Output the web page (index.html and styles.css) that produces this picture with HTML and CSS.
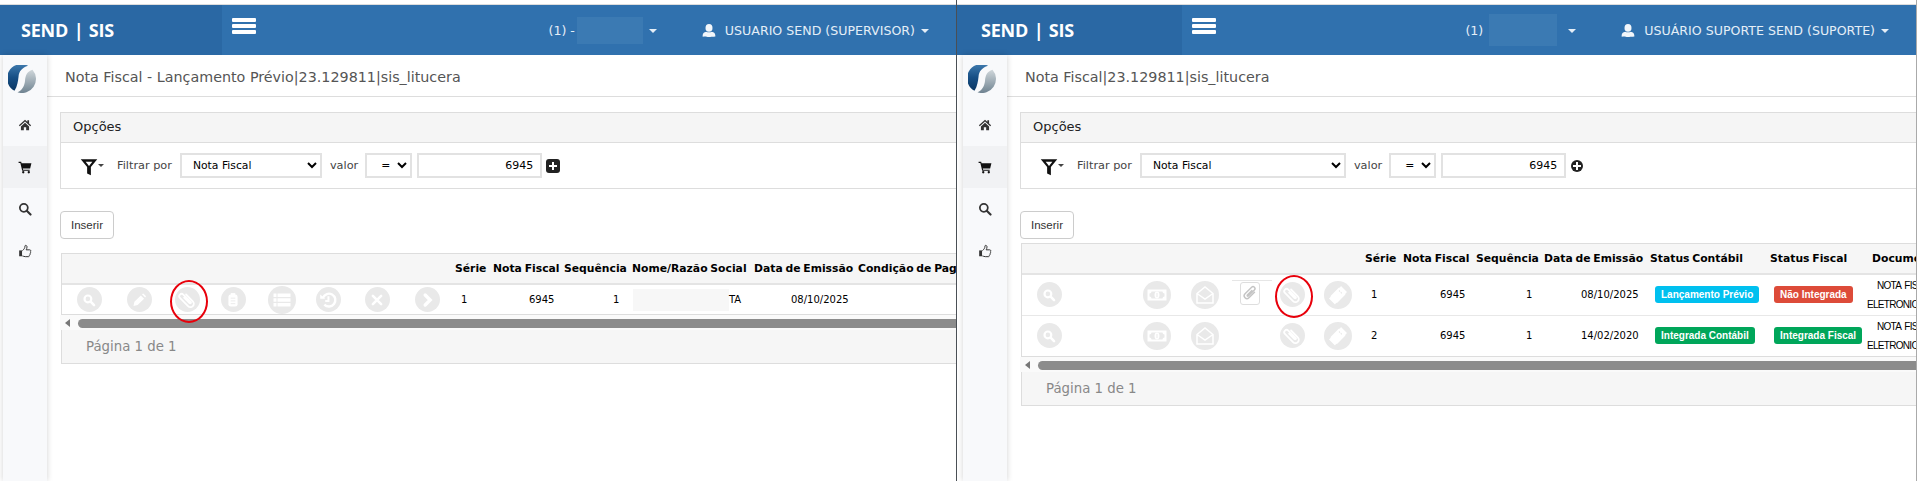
FILE: index.html
```html
<!doctype html>
<html lang="pt-BR">
<head>
    <meta charset="UTF-8">
    <title>SEND | SIS</title>
    <link rel="stylesheet" href="styles.css">
</head>
<body>

<!-- icones usados nas duas telas -->
<svg class="sprite" aria-hidden="true">
    <defs>
        <linearGradient id="logo-azul" x1="0" y1="0" x2="0" y2="1"><stop offset="0" stop-color="#3f7aae"/><stop offset=".5" stop-color="#174f85"/><stop offset="1" stop-color="#0b3763"/></linearGradient>
        <linearGradient id="logo-cinza" x1="0" y1="0" x2="0" y2="1"><stop offset="0" stop-color="#cfd6da"/><stop offset="1" stop-color="#6f8391"/></linearGradient>
    </defs>
    <symbol id="i-logo" viewBox="0 0 28 28">
        <path d="M20 .8A14 14 0 0 0 6.500 25.800C9.500 21 10 16 10.500 12 11 6 14 3 20 .8z" fill="url(#logo-azul)"/>
        <path d="M24.500 4.800A14 14 0 0 1 9.500 27.300C14 25.500 16.500 21 17 16 17.500 10 19 6.500 24.500 4.800z" fill="url(#logo-cinza)"/>
    </symbol>
    <symbol id="i-home" viewBox="0 0 24 24"><path d="M12 3 1.500 12.500 3 14l9-8 9 8 1.500-1.500L19 9.300V4h-3v2.600z"/><path d="M5 14.500 12 8.300l7 6.200V21h-5v-5h-4v5H5z"/></symbol>
    <symbol id="i-cart" viewBox="0 0 24 24"><path d="M1 3h4.500l.6 2.500H23l-2.200 9H8.300l.5 2H20v2H7.200L4 5H1z"/><circle cx="9" cy="21" r="2"/><circle cx="18.500" cy="21" r="2"/></symbol>
    <symbol id="i-search" viewBox="0 0 24 24"><circle cx="10" cy="10" r="6.800" fill="none" stroke="currentColor" stroke-width="3"/><path d="m15 15 6.500 6.500" stroke="currentColor" stroke-width="3.600" stroke-linecap="round"/></symbol>
    <symbol id="i-thumb" viewBox="0 0 24 24"><path d="M2 11h5v10H2z"/><path d="M7.500 11.500c2.500-2 4.500-4.500 4.500-8 0-2 3.500-1.500 3.500 1.500 0 2-1 3.500-1.500 5h6c2.500 0 2.500 3 1 3.500 1 1 .7 2.700-.5 3 .5 1.300 0 2.600-1 3 .3 1.300-.5 2.200-2 2.200h-5c-2 0-3.500-1-5-1.200" fill="#f8f9fb" stroke="currentColor" stroke-width="1.700"/></symbol>
    <symbol id="i-filter" viewBox="0 0 24 24"><path d="M1 1.500h22L14.500 12v11l-5-2.500V12z"/><path d="M7.500 5h9L12 10.500z" fill="#fff"/></symbol>
    <symbol id="i-user" viewBox="0 0 24 24"><ellipse cx="12" cy="7.500" rx="6" ry="6.500"/><path d="M1 22c0-5 2-7.500 6.500-8 1.500 1.200 7.500 1.200 9 0 4.500.5 6.500 3 6.500 8 0 1.500-22 1.500-22 0z"/></symbol>
    <symbol id="i-lupa" viewBox="0 0 24 24"><circle cx="10.800" cy="10.800" r="3.700" fill="none" stroke="#fff" stroke-width="2.400"/><path d="m13.800 13.800 3.700 3.700" stroke="#fff" stroke-width="2.800" stroke-linecap="round"/></symbol>
    <symbol id="i-lapis" viewBox="0 0 24 24"><path d="M14 7 17.500 10.500 10.500 17.500 6 18.500 7 14zM15.200 5.800l1.500-1 3 3-1 1.500z" fill="#fff"/></symbol>
    <symbol id="i-clipe" viewBox="0 0 24 24"><path d="M15.500 7v10.500a3.700 3.700 0 0 1-7.400 0V5a2.600 2.600 0 0 1 5.200 0v11.500a.9.9 0 0 1-1.800 0V8" fill="none" stroke="currentColor" stroke-width="1.900" stroke-linecap="round" transform="rotate(-45 12 12)"/></symbol>
    <symbol id="i-prancheta" viewBox="0 0 24 24"><path d="M9.500 4.500h5V7h-5z" fill="#fff"/><rect x="7" y="6" width="10" height="13" rx="2.500" fill="#fff"/><path d="M9.500 10h5M9.500 13h5M9.500 16h5" stroke="#e9e9e9" stroke-width="1"/></symbol>
    <symbol id="i-lista" viewBox="0 0 24 24"><path d="M3.500 5.500h3v3.400h-3zm4 0h13v3.400h-13zM3.500 10.300h3v3.400h-3zm4 0h13v3.400h-13zM3.500 15.100h3v3.400h-3zm4 0h13v3.400h-13z" fill="#fff"/></symbol>
    <symbol id="i-historico" viewBox="0 0 24 24"><path d="M6.500 9.500A7 7 0 1 1 8 17" fill="none" stroke="#fff" stroke-width="2.600"/><path d="M3.500 6 9 10.500H3.500z" fill="#fff"/><path d="M12.500 8v5H9" fill="none" stroke="#fff" stroke-width="2.200"/></symbol>
    <symbol id="i-xis" viewBox="0 0 24 24"><path d="m7.500 7.500 9 9M16.500 7.500l-9 9" stroke="#fff" stroke-width="2.800" stroke-linecap="round"/></symbol>
    <symbol id="i-seta" viewBox="0 0 24 24"><path d="m10 6.500 5.500 5.500-5.500 5.500" fill="none" stroke="#fff" stroke-width="3.600" stroke-linecap="round"/></symbol>
    <symbol id="i-nota" viewBox="0 0 24 24"><path fill-rule="evenodd" d="M2.500 6.500h19v11h-19zM4.500 10.500v3A2 2 0 0 1 6.500 15.500h11a2 2 0 0 1 2-2v-3a2 2 0 0 1-2-2h-11a2 2 0 0 1-2 2z" fill="#fff"/><ellipse cx="12" cy="12" rx="2.500" ry="3.400" fill="#fff"/><path d="M12 10v4" stroke="#e9e9e9"/></symbol>
    <symbol id="i-envelope" viewBox="0 0 24 24"><path d="M4 10.500 12 4l8 6.500V20H4zM4 10.500l8 5.500 8-5.500" fill="none" stroke="#fff" stroke-width="1.500"/></symbol>
    <symbol id="i-ticket" viewBox="0 0 24 24"><path d="m15 3 6 6-1.500 1.500-.3 1.300-7.900 7.900-1.300.3L9 21.500l-6-6 1.500-1.500.3-1.300 7.900-7.900 1.300-.3z" fill="#fff"/><path d="m13 7.500 3.500 3.500" stroke="#e9e9e9" stroke-width="1.200" stroke-dasharray="1.500 1"/></symbol>
</svg>

<main class="telas">

    <section class="tela">
        <header class="topo">
            <div class="marca">SEND | SIS</div>
            <div class="sanduiche"><span></span><span></span><span></span></div>
            <div class="topo-direita">
                <span class="empresa">(1) -<span class="borrado borrado-curto"></span></span>
                <span class="seta-baixo"></span>
                <svg class="usuario-icone"><use href="#i-user"/></svg>
                <span class="usuario">USUARIO SEND (SUPERVISOR)</span>
                <span class="seta-baixo"></span>
            </div>
        </header>
        <div class="corpo">
            <nav class="lateral">
                <div class="logo"><svg><use href="#i-logo"/></svg></div>
                <a class="lateral-item"><svg><use href="#i-home"/></svg></a>
                <a class="lateral-item ativo"><svg><use href="#i-cart"/></svg></a>
                <a class="lateral-item"><svg><use href="#i-search"/></svg></a>
                <a class="lateral-item"><svg><use href="#i-thumb"/></svg></a>
            </nav>
            <div class="conteudo">
                <h1 class="titulo">Nota Fiscal - Lançamento Prévio|23.129811|sis_litucera</h1>
                <div class="painel">
                    <div class="painel-topo">Opções</div>
                    <div class="filtros">
                        <svg class="funil"><use href="#i-filter"/></svg>
                        <span class="seta-funil"></span>
                        <label class="rotulo rotulo-filtro">Filtrar por</label>
                        <select class="campo campo-coluna"><option>Nota Fiscal</option></select>
                        <label class="rotulo">valor</label>
                        <select class="campo campo-op"><option>=</option></select>
                        <input class="campo campo-valor" value="6945">
                        <span class="mais mais-quadrado"></span>
                    </div>
                </div>
                <button class="inserir">Inserir</button>
                <div class="grade grade-previo">
                    <table>
                        <colgroup><col><col><col><col><col><col><col></colgroup>
                        <thead>
                        <tr><th></th><th>Série</th><th>Nota Fiscal</th><th>Sequência</th><th>Nome/Razão Social</th><th>Data de Emissão</th><th>Condição de Pagamento</th></tr>
                        </thead>
                        <tbody>
                        <tr>
                            <td>
                                <div class="acoes acoes-previo">
                                    <span class="acao"><svg><use href="#i-lupa"/></svg></span>
                                    <span class="acao"><svg><use href="#i-lapis"/></svg></span>
                                    <span class="acao acao-marcada"><svg><use href="#i-clipe"/></svg></span>
                                    <span class="acao"><svg><use href="#i-prancheta"/></svg></span>
                                    <span class="acao acao-grande"><svg><use href="#i-lista"/></svg></span>
                                    <span class="acao"><svg><use href="#i-historico"/></svg></span>
                                    <span class="acao"><svg><use href="#i-xis"/></svg></span>
                                    <span class="acao"><svg><use href="#i-seta"/></svg></span>
                                </div>
                            </td>
                            <td>1</td><td>6945</td><td>1</td>
                            <td><span class="borrado borrado-nome"></span>TA</td>
                            <td>08/10/2025</td><td></td>
                        </tr>
                        </tbody>
                    </table>
                </div>
                <div class="rolagem"><span class="rolagem-seta"></span><span class="rolagem-barra"></span></div>
                <div class="rodape">Página 1 de 1</div>
            </div>
        </div>
    </section>

    <div class="divisor"></div>

    <section class="tela tela-direita">
        <header class="topo">
            <div class="marca">SEND | SIS</div>
            <div class="sanduiche"><span></span><span></span><span></span></div>
            <div class="topo-direita">
                <span class="empresa">(1)<span class="borrado borrado-longo"></span></span>
                <span class="seta-baixo"></span>
                <svg class="usuario-icone"><use href="#i-user"/></svg>
                <span class="usuario">USUÁRIO SUPORTE SEND (SUPORTE)</span>
                <span class="seta-baixo"></span>
            </div>
        </header>
        <div class="corpo">
            <nav class="lateral">
                <div class="logo"><svg><use href="#i-logo"/></svg></div>
                <a class="lateral-item"><svg><use href="#i-home"/></svg></a>
                <a class="lateral-item ativo"><svg><use href="#i-cart"/></svg></a>
                <a class="lateral-item"><svg><use href="#i-search"/></svg></a>
                <a class="lateral-item"><svg><use href="#i-thumb"/></svg></a>
            </nav>
            <div class="conteudo">
                <h1 class="titulo">Nota Fiscal|23.129811|sis_litucera</h1>
                <div class="painel">
                    <div class="painel-topo">Opções</div>
                    <div class="filtros">
                        <svg class="funil"><use href="#i-filter"/></svg>
                        <span class="seta-funil"></span>
                        <label class="rotulo rotulo-filtro">Filtrar por</label>
                        <select class="campo campo-coluna campo-coluna-longo"><option>Nota Fiscal</option></select>
                        <label class="rotulo">valor</label>
                        <select class="campo campo-op"><option>=</option></select>
                        <input class="campo campo-valor" value="6945">
                        <span class="mais mais-redondo"></span>
                    </div>
                </div>
                <button class="inserir">Inserir</button>
                <div class="grade grade-nf">
                    <table>
                        <colgroup><col><col><col><col><col><col><col><col></colgroup>
                        <thead>
                        <tr><th></th><th>Série</th><th>Nota Fiscal</th><th>Sequência</th><th>Data de Emissão</th><th>Status Contábil</th><th>Status Fiscal</th><th>Documento</th></tr>
                        </thead>
                        <tbody>
                        <tr>
                            <td>
                                <div class="acoes acoes-nf">
                                    <span class="acao"><svg><use href="#i-lupa"/></svg></span>
                                    <span></span>
                                    <span class="acao acao-grande"><svg><use href="#i-nota"/></svg></span>
                                    <span class="acao acao-grande"><svg><use href="#i-envelope"/></svg></span>
                                    <span class="anexo"><svg><use href="#i-clipe"/></svg></span>
                                    <span class="acao acao-marcada"><svg><use href="#i-clipe"/></svg></span>
                                    <span class="acao acao-grande"><svg><use href="#i-ticket"/></svg></span>
                                </div>
                            </td>
                            <td>1</td><td>6945</td><td>1</td><td>08/10/2025</td>
                            <td><span class="selo selo-azul">Lançamento Prévio</span></td>
                            <td><span class="selo selo-vermelho">Não Integrada</span></td>
                            <td class="documento"><span class="doc-tipo">NOTA FISCAL</span>ELETRONICA</td>
                        </tr>
                        <tr>
                            <td>
                                <div class="acoes acoes-nf">
                                    <span class="acao"><svg><use href="#i-lupa"/></svg></span>
                                    <span></span>
                                    <span class="acao acao-grande"><svg><use href="#i-nota"/></svg></span>
                                    <span class="acao acao-grande"><svg><use href="#i-envelope"/></svg></span>
                                    <span></span>
                                    <span class="acao"><svg><use href="#i-clipe"/></svg></span>
                                    <span class="acao acao-grande"><svg><use href="#i-ticket"/></svg></span>
                                </div>
                            </td>
                            <td>2</td><td>6945</td><td>1</td><td>14/02/2020</td>
                            <td><span class="selo selo-verde">Integrada Contábil</span></td>
                            <td><span class="selo selo-verde">Integrada Fiscal</span></td>
                            <td class="documento"><span class="doc-tipo">NOTA FISCAL</span>ELETRONICA</td>
                        </tr>
                        </tbody>
                    </table>
                </div>
                <div class="rolagem"><span class="rolagem-seta"></span><span class="rolagem-barra"></span></div>
                <div class="rodape">Página 1 de 1</div>
            </div>
        </div>
    </section>

</main>
</body>
</html>
```

FILE: styles.css
```css
* {
    box-sizing: border-box;
}

html, body {
    margin: 0;
    height: 481px;
    overflow: hidden;
    background: #fff;
    font-family: "DejaVu Sans", sans-serif;
    color: #000;
}

.sprite {
    position: absolute;
    width: 0;
    height: 0;
}

.telas {
    display: flex;
    height: 481px;
}

.divisor {
    width: 1px;
    background: #4a4f55;
    flex: none;
}

.tela {
    --margem: 3px;
    width: 956px;
    flex: none;
    padding-top: 4px;
    overflow: hidden;
    display: flex;
    flex-direction: column;
}

.tela-direita {
    --margem: 6px;
    width: 960px;
    border-right: 1px solid #aaa;
}

/* barra azul */
.topo {
    display: flex;
    align-items: center;
    height: 51px;
    flex: none;
    background: #3071ae;
    border-top: 1px solid #ddd;
    background-clip: padding-box;
}

.marca {
    width: calc(219px + var(--margem));
    height: 100%;
    padding-left: calc(18px + var(--margem));
    background: #2a68a4;
    color: #fff;
    font: 700 18px/50px "Open Sans", sans-serif;
    letter-spacing: -.2px;
    word-spacing: 1px;
}

.sanduiche {
    width: 24px;
    margin-left: 10px;
    margin-top: -8px;
    display: flex;
    flex-direction: column;
    gap: 2px;
}

.sanduiche span {
    height: 4px;
    border-radius: 1px;
    background: #fff;
}

.topo-direita {
    margin-left: auto;
    padding-right: 27px;
    display: flex;
    align-items: center;
    color: #e4eef7;
    font-size: 12.600px;
}

.empresa {
    display: flex;
    align-items: center;
    gap: 2px;
}

.seta-baixo {
    width: 0;
    height: 0;
    margin-left: 6px;
    margin-top: 2px;
    border-left: 4px solid transparent;
    border-right: 4px solid transparent;
    border-top: 4px solid #e4eef7;
}

.usuario-icone {
    width: 14px;
    height: 15px;
    margin: 0 9px 0 45px;
    fill: #f2f6fa;
}

.borrado {
    display: block;
    background: #3b7ab3;
}

.borrado-curto {
    width: 66px;
    height: 27px;
}

.borrado-longo {
    width: 68px;
    height: 32px;
    margin: 0 5px 0 4px;
}

.corpo {
    flex: 1;
    display: flex;
    min-height: 0;
}

/* menu da esquerda */
.lateral {
    width: 44px;
    margin-left: var(--margem);
    flex: none;
    background: #f8f9fb;
    box-shadow: 0 0 6px rgba(0, 0, 0, .18);
    position: relative;
}

.logo {
    height: 49px;
    padding: 10px 0 0 5px;
}

.logo svg {
    width: 28px;
    height: 28px;
}

.lateral-item {
    display: flex;
    align-items: center;
    justify-content: center;
    height: 42px;
    color: #333;
}

.lateral-item svg {
    width: 14px;
    height: 14px;
    fill: currentColor;
}

.lateral-item.ativo {
    background: #f1f2f4;
    color: #111;
}

.conteudo {
    flex: 1;
    min-width: 0;
}

.titulo {
    margin: 0;
    height: 42px;
    padding-left: 18px;
    border-bottom: 1px solid #ddd;
    color: #555;
    font-size: 14.300px;
    font-weight: normal;
    line-height: 45px;
}

.painel {
    width: 1000px;
    margin: 15px 0 0 13px;
    border: 1px solid #ddd;
    height: 77px;
}

.painel-topo {
    height: 30px;
    padding-left: 12px;
    background: #f5f5f5;
    border-bottom: 1px solid #ddd;
    font-size: 13px;
    line-height: 28px;
    color: #222;
}

.filtros {
    display: flex;
    align-items: center;
    height: 45px;
    padding-left: 19px;
}

.funil {
    width: 18px;
    height: 18px;
    fill: #111;
    margin-top: 3px;
}

.seta-funil {
    width: 0;
    height: 0;
    border-left: 3.500px solid transparent;
    border-right: 3.500px solid transparent;
    border-top: 3.500px solid #444;
}

.rotulo {
    margin: 0 7px 0 8px;
    font-size: 11.300px;
    color: #444;
}

.rotulo-filtro {
    margin: 0 8px 0 13px;
}

.campo {
    height: 25px;
    border: 2px solid #e2e2e2;
    background: #fff;
    font-family: "DejaVu Sans", sans-serif;
    font-size: 10.800px;
    color: #000;
    border-radius: 0;
    outline: none;
}

.campo-coluna {
    width: 142px;
    padding-left: 7px;
}

.campo-coluna-longo {
    width: 206px;
}

.campo-op {
    width: 47px;
    padding-left: 10px;
}

.campo-valor {
    width: 125px;
    margin-left: 5px;
    padding-right: 7px;
    text-align: right;
    font-size: 11px;
}

.mais {
    margin-left: 4px;
    width: 14px;
    height: 14px;
    background: #222;
    position: relative;
}

.mais::before, .mais::after {
    content: "";
    position: absolute;
    background: #fff;
    left: 50%;
    top: 50%;
    transform: translate(-50%, -50%);
}

.mais::before {
    width: 8px;
    height: 2px;
}

.mais::after {
    width: 2px;
    height: 8px;
}

.mais-quadrado {
    border-radius: 3px;
}

.mais-redondo {
    width: 12px;
    height: 12px;
    margin-left: 5px;
    border-radius: 50%;
}

.inserir {
    display: block;
    width: 54px;
    height: 28px;
    margin: 22px 0 0 13px;
    border: 1px solid #ccc;
    border-radius: 4px;
    background: #fff;
    font: 11.500px "Liberation Sans", sans-serif;
    color: #333;
}

/* tabelas */
.grade {
    margin: 14px 0 0 14px;
    width: 1000px;
    border: 1px solid #ddd;
}

.grade-nf {
    margin-top: 4px;
}

.grade table {
    border-collapse: collapse;
    table-layout: fixed;
}

.grade-previo table {
    width: 993px;
}

.grade-nf table {
    width: 947px;
}

.grade th {
    height: 30px;
    padding: 0 0 0 3px;
    background: #f6f6f6;
    border-bottom: 2px solid #e4e4e4;
    font-size: 10.800px;
    word-spacing: -1px;
    text-align: left;
    white-space: nowrap;
}

.grade td {
    padding: 0;
    font-size: 10px;
    vertical-align: middle;
    white-space: nowrap;
}

.grade tbody tr + tr td {
    border-top: 1px solid #e8e8e8;
}

.grade-previo tbody tr {
    height: 30px;
}

.grade-nf tbody tr {
    height: 41px;
}

.grade-previo col:nth-child(1) { width: 390px; }
.grade-previo col:nth-child(2) { width: 38px; }
.grade-previo col:nth-child(3) { width: 71px; }
.grade-previo col:nth-child(4) { width: 68px; }
.grade-previo col:nth-child(5) { width: 122px; }
.grade-previo col:nth-child(6) { width: 104px; }
.grade-previo col:nth-child(7) { width: 200px; }

.grade-previo td:nth-child(2) { padding-left: 9px; }
.grade-previo td:nth-child(3) { padding-left: 39px; }
.grade-previo td:nth-child(4) { padding-left: 52px; }
.grade-previo td:nth-child(5) { padding-left: 4px; }
.grade-previo td:nth-child(6) { padding-left: 40px; }

.grade-nf col:nth-child(1) { width: 340px; }
.grade-nf col:nth-child(2) { width: 38px; }
.grade-nf col:nth-child(3) { width: 73px; }
.grade-nf col:nth-child(4) { width: 68px; }
.grade-nf col:nth-child(5) { width: 106px; }
.grade-nf col:nth-child(6) { width: 120px; }
.grade-nf col:nth-child(7) { width: 100px; }
.grade-nf col:nth-child(8) { width: 102px; }

.grade-nf th:nth-child(8) { padding-left: 5px; }

.grade-nf td:nth-child(2) { padding-left: 9px; }
.grade-nf td:nth-child(3) { padding-left: 40px; }
.grade-nf td:nth-child(4) { padding-left: 53px; }
.grade-nf td:nth-child(5) { padding-left: 40px; }
.grade-nf td:nth-child(6) { padding-left: 8px; }
.grade-nf td:nth-child(7) { padding-left: 7px; }

.grade-nf td.documento {
    padding-left: 0;
    line-height: 19px;
    font-family: "Liberation Sans", sans-serif;
    font-size: 10px;
    letter-spacing: -.7px;
    word-spacing: 1.500px;
}

.doc-tipo {
    display: block;
    padding-left: 10px;
}

.borrado-nome {
    display: inline-block;
    width: 96px;
    height: 22px;
    background: #f7f7f7;
    vertical-align: middle;
}

.acoes {
    display: grid;
    align-items: center;
    justify-items: center;
}

.acoes-previo {
    grid-template-columns: 54px 46px 50px 42px 56px 36px 62px 38px;
}

.acoes-nf {
    grid-template-columns: 54px 54px 54px 42px 48px 36px 56px;
}

.acao {
    display: flex;
    align-items: center;
    justify-content: center;
    width: 25px;
    height: 25px;
    border-radius: 50%;
    background: #e9e9e9;
    color: #fff;
    position: relative;
}

.acao svg {
    width: 22px;
    height: 22px;
}

.acao-grande {
    width: 28px;
    height: 28px;
}

.acao-grande svg {
    width: 24px;
    height: 24px;
}

/* marcacao vermelha por cima do icone */
.acao-marcada::after {
    content: "";
    position: absolute;
    left: -5px;
    top: -7px;
    width: 34px;
    height: 39px;
    border: 2px solid #e8000b;
    border-radius: 50%;
}

.anexo {
    display: flex;
    align-items: center;
    justify-content: center;
    width: 20px;
    height: 23px;
    border: 1px solid #dedede;
    border-radius: 3px;
    color: #c4c4c4;
    margin-top: -3px;
    position: relative;
}

.anexo::before {
    content: "";
    position: absolute;
    top: -3px;
    left: -9px;
    width: 40px;
    height: 1px;
    background: #e6e6e6;
}

.anexo svg {
    width: 18px;
    height: 18px;
    transform: rotate(90deg);
}

.selo {
    display: inline-block;
    height: 17px;
    padding: 0 6px;
    border-radius: 3px;
    color: #fff;
    font: bold 10px/17px "Liberation Sans", sans-serif;
}

.selo-azul { background: #00c0ef; }
.selo-vermelho { background: #dd4b39; }
.selo-verde { background: #00a65a; }

.rolagem {
    display: flex;
    align-items: center;
    height: 15px;
    margin-left: 13px;
    padding-top: 1px;
    background: #fafafa;
}

.rolagem-seta {
    margin-left: 5px;
    width: 0;
    height: 0;
    border-top: 4.500px solid transparent;
    border-bottom: 4.500px solid transparent;
    border-right: 5px solid #777;
}

.rolagem-barra {
    flex: 1;
    height: 9px;
    margin-left: 8px;
    border-radius: 5px 0 0 5px;
    background: #8c8c8c;
}

.rodape {
    width: 1000px;
    height: 34px;
    margin-left: 14px;
    padding-left: 24px;
    background: #f6f6f6;
    border: 1px solid #ddd;
    border-top: 0;
    color: #888;
    font-size: 13.300px;
    line-height: 33px;
}
```
